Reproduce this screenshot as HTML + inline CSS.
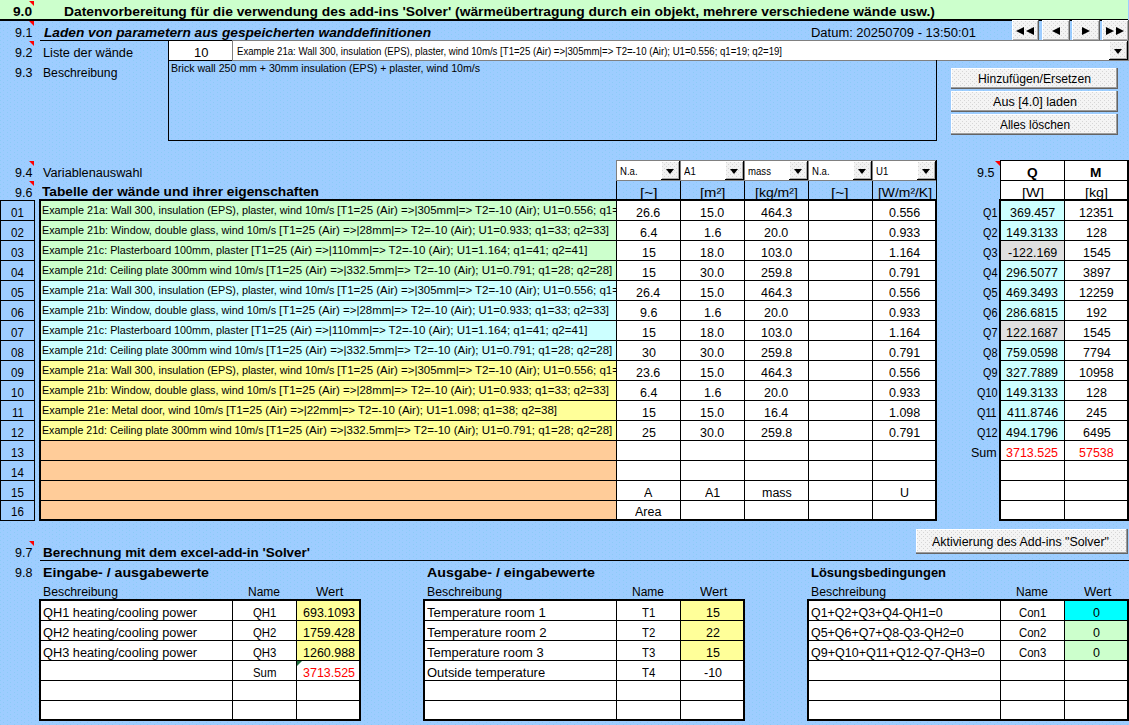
<!DOCTYPE html>
<html><head><meta charset="utf-8"><title>Solver</title><style>
html,body{margin:0;padding:0;}
body{width:1129px;height:725px;position:relative;overflow:hidden;background-color:#9ECDFF;font-family:"Liberation Sans",sans-serif;color:#000;}
.pat{background-image:radial-gradient(circle at 0.5px 0.5px,#8CCBF6 0.5px,rgba(140,203,246,0) 0.9px),radial-gradient(circle at 0.5px 0.5px,#8CCBF6 0.5px,rgba(140,203,246,0) 0.9px);background-size:7px 4px,7px 4px;background-position:0 0,3px 2px;}
body div{position:absolute;}
.t{white-space:pre;line-height:20px;}
.btn{background:#F0F0F0;box-shadow:inset -1px -1px 0 #404040, inset 1px 1px 0 #FFFFFF, inset -2px -2px 0 #808080;}
.btn2{background-color:#F4F4F4;box-shadow:inset -1px -1px 0 #646464, inset -2px -2px 0 #9C9C9C, inset 1px 1px 0 #FFFFFF;}
.btn2,.btn3,.btn4{background-image:radial-gradient(circle at 0.5px 0.5px,#D6D6D6 0.5px,rgba(214,214,214,0) 0.9px),radial-gradient(circle at 0.5px 0.5px,#D6D6D6 0.5px,rgba(214,214,214,0) 0.9px);background-size:4px 4px,4px 4px;background-position:1px 1px,3px 3px;}
.btn4{background-color:#F4F4F4;box-shadow:inset -1px -1px 0 #606060, inset 1px 1px 0 #FFFFFF, inset -2px -2px 0 #B0B0B0;}
.btn3{background-color:#F2F2F2;box-shadow:inset -1px -1px 0 #000000, inset 1px 1px 0 #FFFFFF, inset -2px -2px 0 #A8A8A8;}
</style></head><body>
<div class="pat" style="left:0;top:0;width:1129px;height:725px"></div>
<div style="left:0px;top:0px;width:1128px;height:19px;background:#CCFFCC;"></div>
<div style="left:0px;top:19px;width:1128px;height:2px;background:#000;"></div>
<div style="left:40px;top:40px;width:192px;height:1px;background:#000;"></div>
<div class="btn4" style="left:1012px;top:20px;width:27px;height:21px"></div>
<div class="btn4" style="left:1042px;top:20px;width:28px;height:21px"></div>
<div class="btn4" style="left:1072px;top:20px;width:28px;height:21px"></div>
<div class="btn4" style="left:1102px;top:20px;width:27px;height:21px"></div>
<div style="left:169px;top:41px;width:63px;height:19px;background:#FFFFFF;"></div>
<div style="left:233px;top:41px;width:895px;height:19px;background:#FFFFFF;"></div>
<div style="left:232px;top:40px;width:897px;height:1px;background:#808080;"></div>
<div style="left:232px;top:40px;width:1px;height:21px;background:#808080;"></div>
<div style="left:232px;top:60px;width:897px;height:1px;background:#808080;"></div>
<div style="left:1128px;top:40px;width:1px;height:21px;background:#808080;"></div>
<div style="left:168px;top:40px;width:1px;height:101px;background:#000;"></div>
<div style="left:936px;top:60px;width:1px;height:81px;background:#000;"></div>
<div style="left:168px;top:140px;width:769px;height:1px;background:#000;"></div>
<div style="left:168px;top:60px;width:64px;height:1px;background:#000;"></div>
<div class="btn2" style="left:951px;top:68px;width:167px;height:21px"></div>
<div class="btn2" style="left:951px;top:91px;width:167px;height:21px"></div>
<div class="btn2" style="left:951px;top:114px;width:167px;height:21px"></div>
<div style="left:616px;top:160px;width:64px;height:21px;background:#808080;"></div>
<div style="left:617px;top:161px;width:63px;height:19px;background:#FFFFFF;"></div>
<div style="left:680px;top:160px;width:64px;height:21px;background:#808080;"></div>
<div style="left:681px;top:161px;width:63px;height:19px;background:#FFFFFF;"></div>
<div style="left:744px;top:160px;width:64px;height:21px;background:#808080;"></div>
<div style="left:745px;top:161px;width:63px;height:19px;background:#FFFFFF;"></div>
<div style="left:808px;top:160px;width:64px;height:21px;background:#808080;"></div>
<div style="left:809px;top:161px;width:63px;height:19px;background:#FFFFFF;"></div>
<div style="left:872px;top:160px;width:64px;height:21px;background:#808080;"></div>
<div style="left:873px;top:161px;width:63px;height:19px;background:#FFFFFF;"></div>
<div style="left:616px;top:181px;width:1px;height:20px;background:#000;"></div>
<div style="left:680px;top:181px;width:1px;height:20px;background:#000;"></div>
<div style="left:744px;top:181px;width:1px;height:20px;background:#000;"></div>
<div style="left:808px;top:181px;width:1px;height:20px;background:#000;"></div>
<div style="left:872px;top:181px;width:1px;height:20px;background:#000;"></div>
<div style="left:936px;top:160px;width:1px;height:40px;background:#000;"></div>
<div style="left:935px;top:199px;width:2px;height:322px;background:#000;"></div>
<div style="left:1000px;top:160px;width:128px;height:40px;background:#FFFFFF;"></div>
<div style="left:1000px;top:160px;width:129px;height:1px;background:#000;"></div>
<div style="left:1000px;top:180px;width:129px;height:1px;background:#000;"></div>
<div style="left:1000px;top:160px;width:1px;height:41px;background:#000;"></div>
<div style="left:1064px;top:160px;width:1px;height:361px;background:#000;"></div>
<div style="left:1127px;top:160px;width:2px;height:361px;background:#000;"></div>
<div style="left:1px;top:201px;width:33px;height:19px;background:#9ECDFF;"></div>
<div style="left:41px;top:201px;width:575px;height:19px;background:#CCFFCC;"></div>
<div style="left:617px;top:201px;width:318px;height:19px;background:#FFFFFF;"></div>
<div style="left:1001px;top:201px;width:63px;height:19px;background:#CCFFFF;"></div>
<div style="left:1065px;top:201px;width:62px;height:19px;background:#FFFFFF;"></div>
<div style="left:1px;top:221px;width:33px;height:19px;background:#9ECDFF;"></div>
<div style="left:41px;top:221px;width:575px;height:19px;background:#CCFFCC;"></div>
<div style="left:617px;top:221px;width:318px;height:19px;background:#FFFFFF;"></div>
<div style="left:1001px;top:221px;width:63px;height:19px;background:#CCFFFF;"></div>
<div style="left:1065px;top:221px;width:62px;height:19px;background:#FFFFFF;"></div>
<div style="left:1px;top:241px;width:33px;height:19px;background:#9ECDFF;"></div>
<div style="left:41px;top:241px;width:575px;height:19px;background:#CCFFCC;"></div>
<div style="left:617px;top:241px;width:318px;height:19px;background:#FFFFFF;"></div>
<div style="left:1001px;top:241px;width:63px;height:19px;background:#E0E0E0;"></div>
<div style="left:1065px;top:241px;width:62px;height:19px;background:#FFFFFF;"></div>
<div style="left:1px;top:261px;width:33px;height:19px;background:#9ECDFF;"></div>
<div style="left:41px;top:261px;width:575px;height:19px;background:#CCFFCC;"></div>
<div style="left:617px;top:261px;width:318px;height:19px;background:#FFFFFF;"></div>
<div style="left:1001px;top:261px;width:63px;height:19px;background:#CCFFFF;"></div>
<div style="left:1065px;top:261px;width:62px;height:19px;background:#FFFFFF;"></div>
<div style="left:1px;top:281px;width:33px;height:19px;background:#9ECDFF;"></div>
<div style="left:41px;top:281px;width:575px;height:19px;background:#CCFFFF;"></div>
<div style="left:617px;top:281px;width:318px;height:19px;background:#FFFFFF;"></div>
<div style="left:1001px;top:281px;width:63px;height:19px;background:#CCFFFF;"></div>
<div style="left:1065px;top:281px;width:62px;height:19px;background:#FFFFFF;"></div>
<div style="left:1px;top:301px;width:33px;height:19px;background:#9ECDFF;"></div>
<div style="left:41px;top:301px;width:575px;height:19px;background:#CCFFFF;"></div>
<div style="left:617px;top:301px;width:318px;height:19px;background:#FFFFFF;"></div>
<div style="left:1001px;top:301px;width:63px;height:19px;background:#CCFFFF;"></div>
<div style="left:1065px;top:301px;width:62px;height:19px;background:#FFFFFF;"></div>
<div style="left:1px;top:321px;width:33px;height:19px;background:#9ECDFF;"></div>
<div style="left:41px;top:321px;width:575px;height:19px;background:#CCFFFF;"></div>
<div style="left:617px;top:321px;width:318px;height:19px;background:#FFFFFF;"></div>
<div style="left:1001px;top:321px;width:63px;height:19px;background:#E0E0E0;"></div>
<div style="left:1065px;top:321px;width:62px;height:19px;background:#FFFFFF;"></div>
<div style="left:1px;top:341px;width:33px;height:19px;background:#9ECDFF;"></div>
<div style="left:41px;top:341px;width:575px;height:19px;background:#CCFFFF;"></div>
<div style="left:617px;top:341px;width:318px;height:19px;background:#FFFFFF;"></div>
<div style="left:1001px;top:341px;width:63px;height:19px;background:#CCFFFF;"></div>
<div style="left:1065px;top:341px;width:62px;height:19px;background:#FFFFFF;"></div>
<div style="left:1px;top:361px;width:33px;height:19px;background:#9ECDFF;"></div>
<div style="left:41px;top:361px;width:575px;height:19px;background:#FFFF99;"></div>
<div style="left:617px;top:361px;width:318px;height:19px;background:#FFFFFF;"></div>
<div style="left:1001px;top:361px;width:63px;height:19px;background:#CCFFFF;"></div>
<div style="left:1065px;top:361px;width:62px;height:19px;background:#FFFFFF;"></div>
<div style="left:1px;top:381px;width:33px;height:19px;background:#9ECDFF;"></div>
<div style="left:41px;top:381px;width:575px;height:19px;background:#FFFF99;"></div>
<div style="left:617px;top:381px;width:318px;height:19px;background:#FFFFFF;"></div>
<div style="left:1001px;top:381px;width:63px;height:19px;background:#CCFFFF;"></div>
<div style="left:1065px;top:381px;width:62px;height:19px;background:#FFFFFF;"></div>
<div style="left:1px;top:401px;width:33px;height:19px;background:#9ECDFF;"></div>
<div style="left:41px;top:401px;width:575px;height:19px;background:#FFFF99;"></div>
<div style="left:617px;top:401px;width:318px;height:19px;background:#FFFFFF;"></div>
<div style="left:1001px;top:401px;width:63px;height:19px;background:#CCFFFF;"></div>
<div style="left:1065px;top:401px;width:62px;height:19px;background:#FFFFFF;"></div>
<div style="left:1px;top:421px;width:33px;height:19px;background:#9ECDFF;"></div>
<div style="left:41px;top:421px;width:575px;height:19px;background:#FFFF99;"></div>
<div style="left:617px;top:421px;width:318px;height:19px;background:#FFFFFF;"></div>
<div style="left:1001px;top:421px;width:63px;height:19px;background:#CCFFFF;"></div>
<div style="left:1065px;top:421px;width:62px;height:19px;background:#FFFFFF;"></div>
<div style="left:1px;top:441px;width:33px;height:19px;background:#9ECDFF;"></div>
<div style="left:41px;top:441px;width:575px;height:19px;background:#FFCC99;"></div>
<div style="left:617px;top:441px;width:318px;height:19px;background:#FFFFFF;"></div>
<div style="left:1001px;top:441px;width:63px;height:19px;background:#FFFFFF;"></div>
<div style="left:1065px;top:441px;width:62px;height:19px;background:#FFFFFF;"></div>
<div style="left:1px;top:461px;width:33px;height:19px;background:#9ECDFF;"></div>
<div style="left:41px;top:461px;width:575px;height:19px;background:#FFCC99;"></div>
<div style="left:617px;top:461px;width:318px;height:19px;background:#FFFFFF;"></div>
<div style="left:1001px;top:461px;width:63px;height:19px;background:#FFFFFF;"></div>
<div style="left:1065px;top:461px;width:62px;height:19px;background:#FFFFFF;"></div>
<div style="left:1px;top:481px;width:33px;height:19px;background:#9ECDFF;"></div>
<div style="left:41px;top:481px;width:575px;height:19px;background:#FFCC99;"></div>
<div style="left:617px;top:481px;width:318px;height:19px;background:#FFFFFF;"></div>
<div style="left:1001px;top:481px;width:63px;height:19px;background:#FFFFFF;"></div>
<div style="left:1065px;top:481px;width:62px;height:19px;background:#FFFFFF;"></div>
<div style="left:1px;top:501px;width:33px;height:19px;background:#9ECDFF;"></div>
<div style="left:41px;top:501px;width:575px;height:19px;background:#FFCC99;"></div>
<div style="left:617px;top:501px;width:318px;height:19px;background:#FFFFFF;"></div>
<div style="left:1001px;top:501px;width:63px;height:19px;background:#FFFFFF;"></div>
<div style="left:1065px;top:501px;width:62px;height:19px;background:#FFFFFF;"></div>
<div style="left:0px;top:200px;width:35px;height:1px;background:#000;"></div>
<div style="left:40px;top:199px;width:897px;height:2px;background:#000;"></div>
<div style="left:1000px;top:199px;width:129px;height:2px;background:#000;"></div>
<div style="left:0px;top:220px;width:35px;height:1px;background:#000;"></div>
<div style="left:40px;top:220px;width:896px;height:1px;background:#000;"></div>
<div style="left:1000px;top:220px;width:128px;height:1px;background:#000;"></div>
<div style="left:0px;top:240px;width:35px;height:1px;background:#000;"></div>
<div style="left:40px;top:240px;width:896px;height:1px;background:#000;"></div>
<div style="left:1000px;top:240px;width:128px;height:1px;background:#000;"></div>
<div style="left:0px;top:260px;width:35px;height:1px;background:#000;"></div>
<div style="left:40px;top:260px;width:896px;height:1px;background:#000;"></div>
<div style="left:1000px;top:260px;width:128px;height:1px;background:#000;"></div>
<div style="left:0px;top:280px;width:35px;height:1px;background:#000;"></div>
<div style="left:40px;top:280px;width:896px;height:1px;background:#000;"></div>
<div style="left:1000px;top:280px;width:128px;height:1px;background:#000;"></div>
<div style="left:0px;top:300px;width:35px;height:1px;background:#000;"></div>
<div style="left:40px;top:300px;width:896px;height:1px;background:#000;"></div>
<div style="left:1000px;top:300px;width:128px;height:1px;background:#000;"></div>
<div style="left:0px;top:320px;width:35px;height:1px;background:#000;"></div>
<div style="left:40px;top:320px;width:896px;height:1px;background:#000;"></div>
<div style="left:1000px;top:320px;width:128px;height:1px;background:#000;"></div>
<div style="left:0px;top:340px;width:35px;height:1px;background:#000;"></div>
<div style="left:40px;top:340px;width:896px;height:1px;background:#000;"></div>
<div style="left:1000px;top:340px;width:128px;height:1px;background:#000;"></div>
<div style="left:0px;top:360px;width:35px;height:1px;background:#000;"></div>
<div style="left:40px;top:360px;width:896px;height:1px;background:#000;"></div>
<div style="left:1000px;top:360px;width:128px;height:1px;background:#000;"></div>
<div style="left:0px;top:380px;width:35px;height:1px;background:#000;"></div>
<div style="left:40px;top:380px;width:896px;height:1px;background:#000;"></div>
<div style="left:1000px;top:380px;width:128px;height:1px;background:#000;"></div>
<div style="left:0px;top:400px;width:35px;height:1px;background:#000;"></div>
<div style="left:40px;top:400px;width:896px;height:1px;background:#000;"></div>
<div style="left:1000px;top:400px;width:128px;height:1px;background:#000;"></div>
<div style="left:0px;top:420px;width:35px;height:1px;background:#000;"></div>
<div style="left:40px;top:420px;width:896px;height:1px;background:#000;"></div>
<div style="left:1000px;top:420px;width:128px;height:1px;background:#000;"></div>
<div style="left:0px;top:440px;width:35px;height:1px;background:#000;"></div>
<div style="left:40px;top:440px;width:896px;height:1px;background:#000;"></div>
<div style="left:1000px;top:440px;width:128px;height:1px;background:#000;"></div>
<div style="left:0px;top:460px;width:35px;height:1px;background:#000;"></div>
<div style="left:40px;top:460px;width:896px;height:1px;background:#000;"></div>
<div style="left:1000px;top:460px;width:128px;height:1px;background:#000;"></div>
<div style="left:0px;top:480px;width:35px;height:1px;background:#000;"></div>
<div style="left:40px;top:480px;width:896px;height:1px;background:#000;"></div>
<div style="left:1000px;top:480px;width:128px;height:1px;background:#000;"></div>
<div style="left:0px;top:500px;width:35px;height:1px;background:#000;"></div>
<div style="left:40px;top:500px;width:896px;height:1px;background:#000;"></div>
<div style="left:1000px;top:500px;width:128px;height:1px;background:#000;"></div>
<div style="left:0px;top:520px;width:35px;height:1px;background:#000;"></div>
<div style="left:40px;top:519px;width:897px;height:2px;background:#000;"></div>
<div style="left:1000px;top:519px;width:129px;height:2px;background:#000;"></div>
<div style="left:0px;top:200px;width:1px;height:321px;background:#000;"></div>
<div style="left:34px;top:200px;width:1px;height:321px;background:#000;"></div>
<div style="left:39px;top:199px;width:2px;height:322px;background:#000;"></div>
<div style="left:616px;top:200px;width:1px;height:321px;background:#000;"></div>
<div style="left:680px;top:200px;width:1px;height:321px;background:#000;"></div>
<div style="left:744px;top:200px;width:1px;height:321px;background:#000;"></div>
<div style="left:808px;top:200px;width:1px;height:321px;background:#000;"></div>
<div style="left:872px;top:200px;width:1px;height:321px;background:#000;"></div>
<div style="left:999px;top:199px;width:2px;height:322px;background:#000;"></div>
<div style="left:40px;top:560px;width:1089px;height:1px;background:#000;"></div>
<div class="btn2" style="left:916px;top:529px;width:212px;height:25px"></div>
<div style="left:40px;top:600px;width:320px;height:121px;background:#FFFFFF;"></div>
<div style="left:297px;top:601px;width:63px;height:19px;background:#FFFF99;"></div>
<div style="left:297px;top:621px;width:63px;height:19px;background:#FFFF99;"></div>
<div style="left:297px;top:641px;width:63px;height:19px;background:#FFFF99;"></div>
<div style="left:40px;top:620px;width:321px;height:1px;background:#000;"></div>
<div style="left:40px;top:640px;width:321px;height:1px;background:#000;"></div>
<div style="left:40px;top:660px;width:321px;height:1px;background:#000;"></div>
<div style="left:40px;top:680px;width:321px;height:1px;background:#000;"></div>
<div style="left:40px;top:700px;width:321px;height:1px;background:#000;"></div>
<div style="left:39px;top:599px;width:322px;height:2px;background:#000;"></div>
<div style="left:39px;top:719px;width:322px;height:2px;background:#000;"></div>
<div style="left:39px;top:599px;width:2px;height:122px;background:#000;"></div>
<div style="left:232px;top:600px;width:1px;height:121px;background:#000;"></div>
<div style="left:296px;top:600px;width:1px;height:121px;background:#000;"></div>
<div style="left:359px;top:599px;width:2px;height:122px;background:#000;"></div>
<div style="left:424px;top:600px;width:320px;height:121px;background:#FFFFFF;"></div>
<div style="left:681px;top:601px;width:63px;height:19px;background:#FFFF99;"></div>
<div style="left:681px;top:621px;width:63px;height:19px;background:#FFFF99;"></div>
<div style="left:681px;top:641px;width:63px;height:19px;background:#FFFF99;"></div>
<div style="left:424px;top:620px;width:321px;height:1px;background:#000;"></div>
<div style="left:424px;top:640px;width:321px;height:1px;background:#000;"></div>
<div style="left:424px;top:660px;width:321px;height:1px;background:#000;"></div>
<div style="left:424px;top:680px;width:321px;height:1px;background:#000;"></div>
<div style="left:424px;top:700px;width:321px;height:1px;background:#000;"></div>
<div style="left:423px;top:599px;width:322px;height:2px;background:#000;"></div>
<div style="left:423px;top:719px;width:322px;height:2px;background:#000;"></div>
<div style="left:423px;top:599px;width:2px;height:122px;background:#000;"></div>
<div style="left:616px;top:600px;width:1px;height:121px;background:#000;"></div>
<div style="left:680px;top:600px;width:1px;height:121px;background:#000;"></div>
<div style="left:743px;top:599px;width:2px;height:122px;background:#000;"></div>
<div style="left:808px;top:600px;width:320px;height:121px;background:#FFFFFF;"></div>
<div style="left:1065px;top:601px;width:63px;height:19px;background:#00FFFF;"></div>
<div style="left:1065px;top:621px;width:63px;height:19px;background:#CCFFCC;"></div>
<div style="left:1065px;top:641px;width:63px;height:19px;background:#CCFFCC;"></div>
<div style="left:808px;top:620px;width:321px;height:1px;background:#000;"></div>
<div style="left:808px;top:640px;width:321px;height:1px;background:#000;"></div>
<div style="left:808px;top:660px;width:321px;height:1px;background:#000;"></div>
<div style="left:808px;top:680px;width:321px;height:1px;background:#000;"></div>
<div style="left:808px;top:700px;width:321px;height:1px;background:#000;"></div>
<div style="left:807px;top:599px;width:322px;height:2px;background:#000;"></div>
<div style="left:807px;top:719px;width:322px;height:2px;background:#000;"></div>
<div style="left:807px;top:599px;width:2px;height:122px;background:#000;"></div>
<div style="left:1000px;top:600px;width:1px;height:121px;background:#000;"></div>
<div style="left:1064px;top:600px;width:1px;height:121px;background:#000;"></div>
<div style="left:1127px;top:599px;width:2px;height:122px;background:#000;"></div>
<div style="left:297px;top:661px;width:0;height:0;border-top:5px solid #1E6E3C;border-right:5px solid transparent"></div>
<div class="btn3" style="left:1109px;top:41px;width:19px;height:19px"></div>
<div class="btn3" style="left:661px;top:161px;width:19px;height:19px"></div>
<div class="btn3" style="left:725px;top:161px;width:19px;height:19px"></div>
<div class="btn3" style="left:789px;top:161px;width:19px;height:19px"></div>
<div class="btn3" style="left:853px;top:161px;width:19px;height:19px"></div>
<div class="btn3" style="left:917px;top:161px;width:19px;height:19px"></div>
<div style="left:1114px;top:49px;width:0;height:0;border-top:5px solid #000;border-left:4.5px solid transparent;border-right:4.5px solid transparent"></div>
<div style="left:666px;top:169px;width:0;height:0;border-top:5px solid #000;border-left:4.5px solid transparent;border-right:4.5px solid transparent"></div>
<div style="left:730px;top:169px;width:0;height:0;border-top:5px solid #000;border-left:4.5px solid transparent;border-right:4.5px solid transparent"></div>
<div style="left:794px;top:169px;width:0;height:0;border-top:5px solid #000;border-left:4.5px solid transparent;border-right:4.5px solid transparent"></div>
<div style="left:858px;top:169px;width:0;height:0;border-top:5px solid #000;border-left:4.5px solid transparent;border-right:4.5px solid transparent"></div>
<div style="left:922px;top:169px;width:0;height:0;border-top:5px solid #000;border-left:4.5px solid transparent;border-right:4.5px solid transparent"></div>
<div class="t" style="left:12.98px;top:2px;font-size:12px;font-weight:bold;transform:scaleX(1.1400);transform-origin:0 0;">9.0</div>
<div class="t" style="left:64px;top:2px;font-size:12px;font-weight:bold;transform:scaleX(1.1509);transform-origin:0 0;">Datenvorbereitung für die verwendung des add-ins &#x27;Solver&#x27; (wärmeübertragung durch ein objekt, mehrere verschiedene wände usw.)</div>
<div class="t" style="left:14.64px;top:23px;font-size:12px;transform:scaleX(1.0400);transform-origin:0 0;">9.1</div>
<div class="t" style="left:43.5px;top:23px;font-size:12px;font-weight:bold;font-style:italic;transform:scaleX(1.1402);transform-origin:0 0;">Laden von parametern aus gespeicherten wanddefinitionen</div>
<div class="t" style="left:811px;top:23px;font-size:12px;transform:scaleX(1.0800);transform-origin:0 0;">Datum: 20250709 - 13:50:01</div>
<div class="t" style="left:14.64px;top:43px;font-size:12px;transform:scaleX(1.0400);transform-origin:0 0;">9.2</div>
<div class="t" style="left:43px;top:43px;font-size:12px;transform:scaleX(1.0621);transform-origin:0 0;">Liste der wände</div>
<div class="t" style="left:193.79px;top:43px;font-size:12px;transform:scaleX(1.0800);transform-origin:0 0;">10</div>
<div class="t" style="left:237px;top:42px;font-size:10px;transform:scaleX(0.9614);transform-origin:0 0;">Example 21a: Wall 300, insulation (EPS), plaster, wind 10m/s [T1=25 (Air) =&gt;|305mm|=&gt; T2=-10 (Air); U1=0.556; q1=19; q2=19]</div>
<div class="t" style="left:14.64px;top:63px;font-size:12px;transform:scaleX(1.0400);transform-origin:0 0;">9.3</div>
<div class="t" style="left:43px;top:63px;font-size:12px;transform:scaleX(1.0138);transform-origin:0 0;">Beschreibung</div>
<div class="t" style="left:171px;top:58px;font-size:11px;transform:scaleX(0.9627);transform-origin:0 0;">Brick wall 250 mm + 30mm insulation (EPS) + plaster, wind 10m/s</div>
<div class="t" style="left:978.00px;top:69px;font-size:12px;transform:scaleX(1.0143);transform-origin:0 0;">Hinzufügen/Ersetzen</div>
<div class="t" style="left:992.50px;top:92px;font-size:12px;transform:scaleX(1.0492);transform-origin:0 0;">Aus [4.0] laden</div>
<div class="t" style="left:999.50px;top:115px;font-size:12px;transform:scaleX(0.9898);transform-origin:0 0;">Alles löschen</div>
<div class="t" style="left:14.64px;top:163px;font-size:12px;transform:scaleX(1.0400);transform-origin:0 0;">9.4</div>
<div class="t" style="left:43px;top:163px;font-size:12px;transform:scaleX(1.0581);transform-origin:0 0;">Variablenauswahl</div>
<div class="t" style="left:620px;top:162px;font-size:10px;transform:scaleX(0.9600);transform-origin:0 0;">N.a.</div>
<div class="t" style="left:684px;top:162px;font-size:10px;transform:scaleX(0.9600);transform-origin:0 0;">A1</div>
<div class="t" style="left:748px;top:162px;font-size:10px;transform:scaleX(0.9600);transform-origin:0 0;">mass</div>
<div class="t" style="left:812px;top:162px;font-size:10px;transform:scaleX(0.9600);transform-origin:0 0;">N.a.</div>
<div class="t" style="left:876px;top:162px;font-size:10px;transform:scaleX(0.9600);transform-origin:0 0;">U1</div>
<div class="t" style="left:639.75px;top:183px;font-size:12px;transform:scaleX(1.2932);transform-origin:0 0;">[~]</div>
<div class="t" style="left:699.75px;top:183px;font-size:12px;transform:scaleX(1.2336);transform-origin:0 0;">[m²]</div>
<div class="t" style="left:755.00px;top:183px;font-size:12px;transform:scaleX(1.1671);transform-origin:0 0;">[kg/m²]</div>
<div class="t" style="left:831.15px;top:183px;font-size:12px;transform:scaleX(1.2932);transform-origin:0 0;">[~]</div>
<div class="t" style="left:878.00px;top:183px;font-size:12px;transform:scaleX(1.1570);transform-origin:0 0;">[W/m²/K]</div>
<div class="t" style="left:14.64px;top:183px;font-size:12px;transform:scaleX(1.0400);transform-origin:0 0;">9.6</div>
<div class="t" style="left:42px;top:182px;font-size:12px;font-weight:bold;transform:scaleX(1.1422);transform-origin:0 0;">Tabelle der wände und ihrer eigenschaften</div>
<div class="t" style="left:976.64px;top:163px;font-size:12px;transform:scaleX(1.0400);transform-origin:0 0;">9.5</div>
<div class="t" style="left:1026.67px;top:163px;font-size:12px;font-weight:bold;transform:scaleX(1.1400);transform-origin:0 0;">Q</div>
<div class="t" style="left:1090.30px;top:163px;font-size:12px;font-weight:bold;transform:scaleX(1.1400);transform-origin:0 0;">M</div>
<div class="t" style="left:1022.00px;top:183px;font-size:12px;transform:scaleX(1.2222);transform-origin:0 0;">[W]</div>
<div class="t" style="left:1085.00px;top:183px;font-size:12px;transform:scaleX(1.1890);transform-origin:0 0;">[kg]</div>
<div class="t" style="left:11.19px;top:203px;font-size:12px;transform:scaleX(0.9600);transform-origin:0 0;">01</div>
<div style="left:41px;top:201px;width:575px;height:19px;overflow:hidden"><div class="t" style="left:1.00px;top:-1.00px;font-size:11px;transform:scaleX(0.9810);transform-origin:0 0;">Example 21a: Wall 300, insulation (EPS), plaster, wind 10m/s </div></div>
<div style="left:41px;top:201px;width:575px;height:19px;overflow:hidden"><div class="t" style="left:296.00px;top:-1.00px;font-size:11px;transform:scaleX(1.0432);transform-origin:0 0;">[T1=25 (Air) =&gt;|305mm|=&gt; T2=-10 (Air); U1=0.556; q1=19; q2=19]</div></div>
<div class="t" style="left:636.35px;top:203px;font-size:12px;transform:scaleX(1.0400);transform-origin:0 0;">26.6</div>
<div class="t" style="left:700.35px;top:203px;font-size:12px;transform:scaleX(1.0400);transform-origin:0 0;">15.0</div>
<div class="t" style="left:760.88px;top:203px;font-size:12px;transform:scaleX(1.0400);transform-origin:0 0;">464.3</div>
<div class="t" style="left:888.88px;top:203px;font-size:12px;transform:scaleX(1.0400);transform-origin:0 0;">0.556</div>
<div class="t" style="left:982.59px;top:203px;font-size:12px;transform:scaleX(0.9000);transform-origin:0 0;">Q1</div>
<div class="t" style="left:1009.94px;top:203px;font-size:12px;transform:scaleX(1.0400);transform-origin:0 0;">369.457</div>
<div class="t" style="left:1079.14px;top:203px;font-size:12px;transform:scaleX(1.0400);transform-origin:0 0;">12351</div>
<div class="t" style="left:11.19px;top:223px;font-size:12px;transform:scaleX(0.9600);transform-origin:0 0;">02</div>
<div style="left:41px;top:221px;width:575px;height:19px;overflow:hidden"><div class="t" style="left:1.00px;top:-1.00px;font-size:11px;transform:scaleX(0.9817);transform-origin:0 0;">Example 21b: Window, double glass, wind 10m/s </div></div>
<div style="left:41px;top:221px;width:575px;height:19px;overflow:hidden"><div class="t" style="left:237.80px;top:-1.00px;font-size:11px;transform:scaleX(1.0428);transform-origin:0 0;">[T1=25 (Air) =&gt;|28mm|=&gt; T2=-10 (Air); U1=0.933; q1=33; q2=33]</div></div>
<div class="t" style="left:639.82px;top:223px;font-size:12px;transform:scaleX(1.0400);transform-origin:0 0;">6.4</div>
<div class="t" style="left:703.82px;top:223px;font-size:12px;transform:scaleX(1.0400);transform-origin:0 0;">1.6</div>
<div class="t" style="left:764.35px;top:223px;font-size:12px;transform:scaleX(1.0400);transform-origin:0 0;">20.0</div>
<div class="t" style="left:888.88px;top:223px;font-size:12px;transform:scaleX(1.0400);transform-origin:0 0;">0.933</div>
<div class="t" style="left:982.59px;top:223px;font-size:12px;transform:scaleX(0.9000);transform-origin:0 0;">Q2</div>
<div class="t" style="left:1006.47px;top:223px;font-size:12px;transform:scaleX(1.0400);transform-origin:0 0;">149.3133</div>
<div class="t" style="left:1086.08px;top:223px;font-size:12px;transform:scaleX(1.0400);transform-origin:0 0;">128</div>
<div class="t" style="left:11.19px;top:243px;font-size:12px;transform:scaleX(0.9600);transform-origin:0 0;">03</div>
<div style="left:41px;top:241px;width:575px;height:19px;overflow:hidden"><div class="t" style="left:1.00px;top:-1.00px;font-size:11px;transform:scaleX(0.9776);transform-origin:0 0;">Example 21c: Plasterboard 100mm, plaster </div></div>
<div style="left:41px;top:241px;width:575px;height:19px;overflow:hidden"><div class="t" style="left:209.90px;top:-1.00px;font-size:11px;transform:scaleX(1.0458);transform-origin:0 0;">[T1=25 (Air) =&gt;|110mm|=&gt; T2=-10 (Air); U1=1.164; q1=41; q2=41]</div></div>
<div class="t" style="left:641.55px;top:243px;font-size:12px;transform:scaleX(1.0400);transform-origin:0 0;">15</div>
<div class="t" style="left:700.35px;top:243px;font-size:12px;transform:scaleX(1.0400);transform-origin:0 0;">18.0</div>
<div class="t" style="left:760.88px;top:243px;font-size:12px;transform:scaleX(1.0400);transform-origin:0 0;">103.0</div>
<div class="t" style="left:888.88px;top:243px;font-size:12px;transform:scaleX(1.0400);transform-origin:0 0;">1.164</div>
<div class="t" style="left:982.59px;top:243px;font-size:12px;transform:scaleX(0.9000);transform-origin:0 0;">Q3</div>
<div class="t" style="left:1007.87px;top:243px;font-size:12px;transform:scaleX(1.0400);transform-origin:0 0;">-122.169</div>
<div class="t" style="left:1082.61px;top:243px;font-size:12px;transform:scaleX(1.0400);transform-origin:0 0;">1545</div>
<div class="t" style="left:11.19px;top:263px;font-size:12px;transform:scaleX(0.9600);transform-origin:0 0;">04</div>
<div style="left:41px;top:261px;width:575px;height:19px;overflow:hidden"><div class="t" style="left:1.00px;top:-1.00px;font-size:11px;transform:scaleX(0.9658);transform-origin:0 0;">Example 21d: Ceiling plate 300mm wind 10m/s </div></div>
<div style="left:41px;top:261px;width:575px;height:19px;overflow:hidden"><div class="t" style="left:225.10px;top:-1.00px;font-size:11px;transform:scaleX(1.0439);transform-origin:0 0;">[T1=25 (Air) =&gt;|332.5mm|=&gt; T2=-10 (Air); U1=0.791; q1=28; q2=28]</div></div>
<div class="t" style="left:641.55px;top:263px;font-size:12px;transform:scaleX(1.0400);transform-origin:0 0;">15</div>
<div class="t" style="left:700.35px;top:263px;font-size:12px;transform:scaleX(1.0400);transform-origin:0 0;">30.0</div>
<div class="t" style="left:760.88px;top:263px;font-size:12px;transform:scaleX(1.0400);transform-origin:0 0;">259.8</div>
<div class="t" style="left:888.88px;top:263px;font-size:12px;transform:scaleX(1.0400);transform-origin:0 0;">0.791</div>
<div class="t" style="left:982.59px;top:263px;font-size:12px;transform:scaleX(0.9000);transform-origin:0 0;">Q4</div>
<div class="t" style="left:1006.47px;top:263px;font-size:12px;transform:scaleX(1.0400);transform-origin:0 0;">296.5077</div>
<div class="t" style="left:1082.61px;top:263px;font-size:12px;transform:scaleX(1.0400);transform-origin:0 0;">3897</div>
<div class="t" style="left:11.19px;top:283px;font-size:12px;transform:scaleX(0.9600);transform-origin:0 0;">05</div>
<div style="left:41px;top:281px;width:575px;height:19px;overflow:hidden"><div class="t" style="left:1.00px;top:-1.00px;font-size:11px;transform:scaleX(0.9810);transform-origin:0 0;">Example 21a: Wall 300, insulation (EPS), plaster, wind 10m/s </div></div>
<div style="left:41px;top:281px;width:575px;height:19px;overflow:hidden"><div class="t" style="left:296.00px;top:-1.00px;font-size:11px;transform:scaleX(1.0432);transform-origin:0 0;">[T1=25 (Air) =&gt;|305mm|=&gt; T2=-10 (Air); U1=0.556; q1=19; q2=19]</div></div>
<div class="t" style="left:636.35px;top:283px;font-size:12px;transform:scaleX(1.0400);transform-origin:0 0;">26.4</div>
<div class="t" style="left:700.35px;top:283px;font-size:12px;transform:scaleX(1.0400);transform-origin:0 0;">15.0</div>
<div class="t" style="left:760.88px;top:283px;font-size:12px;transform:scaleX(1.0400);transform-origin:0 0;">464.3</div>
<div class="t" style="left:888.88px;top:283px;font-size:12px;transform:scaleX(1.0400);transform-origin:0 0;">0.556</div>
<div class="t" style="left:982.59px;top:283px;font-size:12px;transform:scaleX(0.9000);transform-origin:0 0;">Q5</div>
<div class="t" style="left:1006.47px;top:283px;font-size:12px;transform:scaleX(1.0400);transform-origin:0 0;">469.3493</div>
<div class="t" style="left:1079.14px;top:283px;font-size:12px;transform:scaleX(1.0400);transform-origin:0 0;">12259</div>
<div class="t" style="left:11.19px;top:303px;font-size:12px;transform:scaleX(0.9600);transform-origin:0 0;">06</div>
<div style="left:41px;top:301px;width:575px;height:19px;overflow:hidden"><div class="t" style="left:1.00px;top:-1.00px;font-size:11px;transform:scaleX(0.9817);transform-origin:0 0;">Example 21b: Window, double glass, wind 10m/s </div></div>
<div style="left:41px;top:301px;width:575px;height:19px;overflow:hidden"><div class="t" style="left:237.80px;top:-1.00px;font-size:11px;transform:scaleX(1.0428);transform-origin:0 0;">[T1=25 (Air) =&gt;|28mm|=&gt; T2=-10 (Air); U1=0.933; q1=33; q2=33]</div></div>
<div class="t" style="left:639.82px;top:303px;font-size:12px;transform:scaleX(1.0400);transform-origin:0 0;">9.6</div>
<div class="t" style="left:703.82px;top:303px;font-size:12px;transform:scaleX(1.0400);transform-origin:0 0;">1.6</div>
<div class="t" style="left:764.35px;top:303px;font-size:12px;transform:scaleX(1.0400);transform-origin:0 0;">20.0</div>
<div class="t" style="left:888.88px;top:303px;font-size:12px;transform:scaleX(1.0400);transform-origin:0 0;">0.933</div>
<div class="t" style="left:982.59px;top:303px;font-size:12px;transform:scaleX(0.9000);transform-origin:0 0;">Q6</div>
<div class="t" style="left:1006.47px;top:303px;font-size:12px;transform:scaleX(1.0400);transform-origin:0 0;">286.6815</div>
<div class="t" style="left:1086.08px;top:303px;font-size:12px;transform:scaleX(1.0400);transform-origin:0 0;">192</div>
<div class="t" style="left:11.19px;top:323px;font-size:12px;transform:scaleX(0.9600);transform-origin:0 0;">07</div>
<div style="left:41px;top:321px;width:575px;height:19px;overflow:hidden"><div class="t" style="left:1.00px;top:-1.00px;font-size:11px;transform:scaleX(0.9776);transform-origin:0 0;">Example 21c: Plasterboard 100mm, plaster </div></div>
<div style="left:41px;top:321px;width:575px;height:19px;overflow:hidden"><div class="t" style="left:209.90px;top:-1.00px;font-size:11px;transform:scaleX(1.0458);transform-origin:0 0;">[T1=25 (Air) =&gt;|110mm|=&gt; T2=-10 (Air); U1=1.164; q1=41; q2=41]</div></div>
<div class="t" style="left:641.55px;top:323px;font-size:12px;transform:scaleX(1.0400);transform-origin:0 0;">15</div>
<div class="t" style="left:700.35px;top:323px;font-size:12px;transform:scaleX(1.0400);transform-origin:0 0;">18.0</div>
<div class="t" style="left:760.88px;top:323px;font-size:12px;transform:scaleX(1.0400);transform-origin:0 0;">103.0</div>
<div class="t" style="left:888.88px;top:323px;font-size:12px;transform:scaleX(1.0400);transform-origin:0 0;">1.164</div>
<div class="t" style="left:982.59px;top:323px;font-size:12px;transform:scaleX(0.9000);transform-origin:0 0;">Q7</div>
<div class="t" style="left:1006.47px;top:323px;font-size:12px;transform:scaleX(1.0400);transform-origin:0 0;">122.1687</div>
<div class="t" style="left:1082.61px;top:323px;font-size:12px;transform:scaleX(1.0400);transform-origin:0 0;">1545</div>
<div class="t" style="left:11.19px;top:343px;font-size:12px;transform:scaleX(0.9600);transform-origin:0 0;">08</div>
<div style="left:41px;top:341px;width:575px;height:19px;overflow:hidden"><div class="t" style="left:1.00px;top:-1.00px;font-size:11px;transform:scaleX(0.9658);transform-origin:0 0;">Example 21d: Ceiling plate 300mm wind 10m/s </div></div>
<div style="left:41px;top:341px;width:575px;height:19px;overflow:hidden"><div class="t" style="left:225.10px;top:-1.00px;font-size:11px;transform:scaleX(1.0439);transform-origin:0 0;">[T1=25 (Air) =&gt;|332.5mm|=&gt; T2=-10 (Air); U1=0.791; q1=28; q2=28]</div></div>
<div class="t" style="left:641.55px;top:343px;font-size:12px;transform:scaleX(1.0400);transform-origin:0 0;">30</div>
<div class="t" style="left:700.35px;top:343px;font-size:12px;transform:scaleX(1.0400);transform-origin:0 0;">30.0</div>
<div class="t" style="left:760.88px;top:343px;font-size:12px;transform:scaleX(1.0400);transform-origin:0 0;">259.8</div>
<div class="t" style="left:888.88px;top:343px;font-size:12px;transform:scaleX(1.0400);transform-origin:0 0;">0.791</div>
<div class="t" style="left:982.59px;top:343px;font-size:12px;transform:scaleX(0.9000);transform-origin:0 0;">Q8</div>
<div class="t" style="left:1006.47px;top:343px;font-size:12px;transform:scaleX(1.0400);transform-origin:0 0;">759.0598</div>
<div class="t" style="left:1082.61px;top:343px;font-size:12px;transform:scaleX(1.0400);transform-origin:0 0;">7794</div>
<div class="t" style="left:11.19px;top:363px;font-size:12px;transform:scaleX(0.9600);transform-origin:0 0;">09</div>
<div style="left:41px;top:361px;width:575px;height:19px;overflow:hidden"><div class="t" style="left:1.00px;top:-1.00px;font-size:11px;transform:scaleX(0.9810);transform-origin:0 0;">Example 21a: Wall 300, insulation (EPS), plaster, wind 10m/s </div></div>
<div style="left:41px;top:361px;width:575px;height:19px;overflow:hidden"><div class="t" style="left:296.00px;top:-1.00px;font-size:11px;transform:scaleX(1.0432);transform-origin:0 0;">[T1=25 (Air) =&gt;|305mm|=&gt; T2=-10 (Air); U1=0.556; q1=19; q2=19]</div></div>
<div class="t" style="left:636.35px;top:363px;font-size:12px;transform:scaleX(1.0400);transform-origin:0 0;">23.6</div>
<div class="t" style="left:700.35px;top:363px;font-size:12px;transform:scaleX(1.0400);transform-origin:0 0;">15.0</div>
<div class="t" style="left:760.88px;top:363px;font-size:12px;transform:scaleX(1.0400);transform-origin:0 0;">464.3</div>
<div class="t" style="left:888.88px;top:363px;font-size:12px;transform:scaleX(1.0400);transform-origin:0 0;">0.556</div>
<div class="t" style="left:982.59px;top:363px;font-size:12px;transform:scaleX(0.9000);transform-origin:0 0;">Q9</div>
<div class="t" style="left:1006.47px;top:363px;font-size:12px;transform:scaleX(1.0400);transform-origin:0 0;">327.7889</div>
<div class="t" style="left:1079.14px;top:363px;font-size:12px;transform:scaleX(1.0400);transform-origin:0 0;">10958</div>
<div class="t" style="left:11.19px;top:383px;font-size:12px;transform:scaleX(0.9600);transform-origin:0 0;">10</div>
<div style="left:41px;top:381px;width:575px;height:19px;overflow:hidden"><div class="t" style="left:1.00px;top:-1.00px;font-size:11px;transform:scaleX(0.9817);transform-origin:0 0;">Example 21b: Window, double glass, wind 10m/s </div></div>
<div style="left:41px;top:381px;width:575px;height:19px;overflow:hidden"><div class="t" style="left:237.80px;top:-1.00px;font-size:11px;transform:scaleX(1.0428);transform-origin:0 0;">[T1=25 (Air) =&gt;|28mm|=&gt; T2=-10 (Air); U1=0.933; q1=33; q2=33]</div></div>
<div class="t" style="left:639.82px;top:383px;font-size:12px;transform:scaleX(1.0400);transform-origin:0 0;">6.4</div>
<div class="t" style="left:703.82px;top:383px;font-size:12px;transform:scaleX(1.0400);transform-origin:0 0;">1.6</div>
<div class="t" style="left:764.35px;top:383px;font-size:12px;transform:scaleX(1.0400);transform-origin:0 0;">20.0</div>
<div class="t" style="left:888.88px;top:383px;font-size:12px;transform:scaleX(1.0400);transform-origin:0 0;">0.933</div>
<div class="t" style="left:976.58px;top:383px;font-size:12px;transform:scaleX(0.9000);transform-origin:0 0;">Q10</div>
<div class="t" style="left:1006.47px;top:383px;font-size:12px;transform:scaleX(1.0400);transform-origin:0 0;">149.3133</div>
<div class="t" style="left:1086.08px;top:383px;font-size:12px;transform:scaleX(1.0400);transform-origin:0 0;">128</div>
<div class="t" style="left:11.62px;top:403px;font-size:12px;transform:scaleX(0.9600);transform-origin:0 0;">11</div>
<div style="left:41px;top:401px;width:575px;height:19px;overflow:hidden"><div class="t" style="left:1.00px;top:-1.00px;font-size:11px;transform:scaleX(0.9872);transform-origin:0 0;">Example 21e: Metal door, wind 10m/s </div></div>
<div style="left:41px;top:401px;width:575px;height:19px;overflow:hidden"><div class="t" style="left:184.80px;top:-1.00px;font-size:11px;transform:scaleX(1.0460);transform-origin:0 0;">[T1=25 (Air) =&gt;|22mm|=&gt; T2=-10 (Air); U1=1.098; q1=38; q2=38]</div></div>
<div class="t" style="left:641.55px;top:403px;font-size:12px;transform:scaleX(1.0400);transform-origin:0 0;">15</div>
<div class="t" style="left:700.35px;top:403px;font-size:12px;transform:scaleX(1.0400);transform-origin:0 0;">15.0</div>
<div class="t" style="left:764.35px;top:403px;font-size:12px;transform:scaleX(1.0400);transform-origin:0 0;">16.4</div>
<div class="t" style="left:888.88px;top:403px;font-size:12px;transform:scaleX(1.0400);transform-origin:0 0;">1.098</div>
<div class="t" style="left:977.38px;top:403px;font-size:12px;transform:scaleX(0.9000);transform-origin:0 0;">Q11</div>
<div class="t" style="left:1006.93px;top:403px;font-size:12px;transform:scaleX(1.0400);transform-origin:0 0;">411.8746</div>
<div class="t" style="left:1086.08px;top:403px;font-size:12px;transform:scaleX(1.0400);transform-origin:0 0;">245</div>
<div class="t" style="left:11.19px;top:423px;font-size:12px;transform:scaleX(0.9600);transform-origin:0 0;">12</div>
<div style="left:41px;top:421px;width:575px;height:19px;overflow:hidden"><div class="t" style="left:1.00px;top:-1.00px;font-size:11px;transform:scaleX(0.9658);transform-origin:0 0;">Example 21d: Ceiling plate 300mm wind 10m/s </div></div>
<div style="left:41px;top:421px;width:575px;height:19px;overflow:hidden"><div class="t" style="left:225.10px;top:-1.00px;font-size:11px;transform:scaleX(1.0439);transform-origin:0 0;">[T1=25 (Air) =&gt;|332.5mm|=&gt; T2=-10 (Air); U1=0.791; q1=28; q2=28]</div></div>
<div class="t" style="left:641.55px;top:423px;font-size:12px;transform:scaleX(1.0400);transform-origin:0 0;">25</div>
<div class="t" style="left:700.35px;top:423px;font-size:12px;transform:scaleX(1.0400);transform-origin:0 0;">30.0</div>
<div class="t" style="left:760.88px;top:423px;font-size:12px;transform:scaleX(1.0400);transform-origin:0 0;">259.8</div>
<div class="t" style="left:888.88px;top:423px;font-size:12px;transform:scaleX(1.0400);transform-origin:0 0;">0.791</div>
<div class="t" style="left:976.58px;top:423px;font-size:12px;transform:scaleX(0.9000);transform-origin:0 0;">Q12</div>
<div class="t" style="left:1006.47px;top:423px;font-size:12px;transform:scaleX(1.0400);transform-origin:0 0;">494.1796</div>
<div class="t" style="left:1082.61px;top:423px;font-size:12px;transform:scaleX(1.0400);transform-origin:0 0;">6495</div>
<div class="t" style="left:11.19px;top:443px;font-size:12px;transform:scaleX(0.9600);transform-origin:0 0;">13</div>
<div class="t" style="left:971.33px;top:443px;font-size:12px;transform:scaleX(1.0400);transform-origin:0 0;">Sum</div>
<div class="t" style="left:1006.47px;top:443px;font-size:12px;color:#FF0000;transform:scaleX(1.0400);transform-origin:0 0;">3713.525</div>
<div class="t" style="left:1079.14px;top:443px;font-size:12px;color:#FF0000;transform:scaleX(1.0400);transform-origin:0 0;">57538</div>
<div class="t" style="left:11.19px;top:463px;font-size:12px;transform:scaleX(0.9600);transform-origin:0 0;">14</div>
<div class="t" style="left:11.19px;top:483px;font-size:12px;transform:scaleX(0.9600);transform-origin:0 0;">15</div>
<div class="t" style="left:644.33px;top:483px;font-size:12px;transform:scaleX(1.0400);transform-origin:0 0;">A</div>
<div class="t" style="left:704.86px;top:483px;font-size:12px;transform:scaleX(1.0400);transform-origin:0 0;">A1</div>
<div class="t" style="left:761.59px;top:483px;font-size:12px;transform:scaleX(1.0400);transform-origin:0 0;">mass</div>
<div class="t" style="left:899.99px;top:483px;font-size:12px;transform:scaleX(1.0400);transform-origin:0 0;">U</div>
<div class="t" style="left:11.19px;top:502px;font-size:12px;transform:scaleX(0.9600);transform-origin:0 0;">16</div>
<div class="t" style="left:635.31px;top:502px;font-size:12px;transform:scaleX(1.0400);transform-origin:0 0;">Area</div>
<div class="t" style="left:14.64px;top:543px;font-size:12px;transform:scaleX(1.0400);transform-origin:0 0;">9.7</div>
<div class="t" style="left:43.3px;top:543px;font-size:12px;font-weight:bold;transform:scaleX(1.1198);transform-origin:0 0;">Berechnung mit dem excel-add-in &#x27;Solver&#x27;</div>
<div class="t" style="left:932.30px;top:532px;font-size:12px;transform:scaleX(1.0334);transform-origin:0 0;">Aktivierung des Add-ins &quot;Solver&quot;</div>
<div class="t" style="left:14.64px;top:563px;font-size:12px;transform:scaleX(1.0400);transform-origin:0 0;">9.8</div>
<div class="t" style="left:43px;top:563px;font-size:12px;font-weight:bold;transform:scaleX(1.1797);transform-origin:0 0;">Eingabe- / ausgabewerte</div>
<div class="t" style="left:43px;top:582px;font-size:12px;transform:scaleX(1.0219);transform-origin:0 0;">Beschreibung</div>
<div class="t" style="left:248.30px;top:582px;font-size:12px;transform:scaleX(0.9995);transform-origin:0 0;">Name</div>
<div class="t" style="left:315.75px;top:582px;font-size:12px;transform:scaleX(1.0866);transform-origin:0 0;">Wert</div>
<div class="t" style="left:43px;top:603px;font-size:12px;transform:scaleX(1.0638);transform-origin:0 0;">QH1 heating/cooling power</div>
<div class="t" style="left:252.77px;top:603px;font-size:12px;transform:scaleX(0.9500);transform-origin:0 0;">QH1</div>
<div class="t" style="left:302.57px;top:603px;font-size:12px;transform:scaleX(1.0400);transform-origin:0 0;">693.1093</div>
<div class="t" style="left:43px;top:623px;font-size:12px;transform:scaleX(1.0638);transform-origin:0 0;">QH2 heating/cooling power</div>
<div class="t" style="left:252.77px;top:623px;font-size:12px;transform:scaleX(0.9500);transform-origin:0 0;">QH2</div>
<div class="t" style="left:302.57px;top:623px;font-size:12px;transform:scaleX(1.0400);transform-origin:0 0;">1759.428</div>
<div class="t" style="left:43px;top:643px;font-size:12px;transform:scaleX(1.0638);transform-origin:0 0;">QH3 heating/cooling power</div>
<div class="t" style="left:252.77px;top:643px;font-size:12px;transform:scaleX(0.9500);transform-origin:0 0;">QH3</div>
<div class="t" style="left:302.57px;top:643px;font-size:12px;transform:scaleX(1.0400);transform-origin:0 0;">1260.988</div>
<div class="t" style="left:252.77px;top:663px;font-size:12px;transform:scaleX(0.9500);transform-origin:0 0;">Sum</div>
<div class="t" style="left:302.57px;top:663px;font-size:12px;color:#FF0000;transform:scaleX(1.0400);transform-origin:0 0;">3713.525</div>
<div class="t" style="left:427px;top:563px;font-size:12px;font-weight:bold;transform:scaleX(1.1883);transform-origin:0 0;">Ausgabe- / eingabewerte</div>
<div class="t" style="left:427px;top:582px;font-size:12px;transform:scaleX(1.0219);transform-origin:0 0;">Beschreibung</div>
<div class="t" style="left:632.30px;top:582px;font-size:12px;transform:scaleX(0.9995);transform-origin:0 0;">Name</div>
<div class="t" style="left:699.75px;top:582px;font-size:12px;transform:scaleX(1.0866);transform-origin:0 0;">Wert</div>
<div class="t" style="left:427px;top:603px;font-size:12px;transform:scaleX(1.0995);transform-origin:0 0;">Temperature room 1</div>
<div class="t" style="left:641.84px;top:603px;font-size:12px;transform:scaleX(0.9500);transform-origin:0 0;">T1</div>
<div class="t" style="left:705.65px;top:603px;font-size:12px;transform:scaleX(1.0400);transform-origin:0 0;">15</div>
<div class="t" style="left:427px;top:623px;font-size:12px;transform:scaleX(1.1069);transform-origin:0 0;">Temperature room 2</div>
<div class="t" style="left:641.84px;top:623px;font-size:12px;transform:scaleX(0.9500);transform-origin:0 0;">T2</div>
<div class="t" style="left:705.65px;top:623px;font-size:12px;transform:scaleX(1.0400);transform-origin:0 0;">22</div>
<div class="t" style="left:427px;top:643px;font-size:12px;transform:scaleX(1.0800);transform-origin:0 0;">Temperature room 3</div>
<div class="t" style="left:641.84px;top:643px;font-size:12px;transform:scaleX(0.9500);transform-origin:0 0;">T3</div>
<div class="t" style="left:705.65px;top:643px;font-size:12px;transform:scaleX(1.0400);transform-origin:0 0;">15</div>
<div class="t" style="left:427px;top:663px;font-size:12px;transform:scaleX(1.0800);transform-origin:0 0;">Outside temperature</div>
<div class="t" style="left:641.84px;top:663px;font-size:12px;transform:scaleX(0.9500);transform-origin:0 0;">T4</div>
<div class="t" style="left:703.58px;top:663px;font-size:12px;transform:scaleX(1.0400);transform-origin:0 0;">-10</div>
<div class="t" style="left:811px;top:563px;font-size:12px;font-weight:bold;transform:scaleX(1.0772);transform-origin:0 0;">Lösungsbedingungen</div>
<div class="t" style="left:811px;top:582px;font-size:12px;transform:scaleX(1.0219);transform-origin:0 0;">Beschreibung</div>
<div class="t" style="left:1016.30px;top:582px;font-size:12px;transform:scaleX(0.9995);transform-origin:0 0;">Name</div>
<div class="t" style="left:1083.75px;top:582px;font-size:12px;transform:scaleX(1.0866);transform-origin:0 0;">Wert</div>
<div class="t" style="left:811px;top:603px;font-size:12px;transform:scaleX(1.0329);transform-origin:0 0;">Q1+Q2+Q3+Q4-QH1=0</div>
<div class="t" style="left:1018.87px;top:603px;font-size:12px;transform:scaleX(0.9500);transform-origin:0 0;">Con1</div>
<div class="t" style="left:1093.12px;top:603px;font-size:12px;transform:scaleX(1.0400);transform-origin:0 0;">0</div>
<div class="t" style="left:811px;top:623px;font-size:12px;transform:scaleX(1.0365);transform-origin:0 0;">Q5+Q6+Q7+Q8-Q3-QH2=0</div>
<div class="t" style="left:1018.87px;top:623px;font-size:12px;transform:scaleX(0.9500);transform-origin:0 0;">Con2</div>
<div class="t" style="left:1093.12px;top:623px;font-size:12px;transform:scaleX(1.0400);transform-origin:0 0;">0</div>
<div class="t" style="left:811px;top:643px;font-size:12px;transform:scaleX(1.0429);transform-origin:0 0;">Q9+Q10+Q11+Q12-Q7-QH3=0</div>
<div class="t" style="left:1018.87px;top:643px;font-size:12px;transform:scaleX(0.9500);transform-origin:0 0;">Con3</div>
<div class="t" style="left:1093.12px;top:643px;font-size:12px;transform:scaleX(1.0400);transform-origin:0 0;">0</div>
<div style="left:29px;top:1px;width:0;height:0;border-top:5px solid #FF0000;border-left:5px solid transparent"></div>
<div style="left:29px;top:21px;width:0;height:0;border-top:5px solid #FF0000;border-left:5px solid transparent"></div>
<div style="left:29px;top:41px;width:0;height:0;border-top:5px solid #FF0000;border-left:5px solid transparent"></div>
<div style="left:29px;top:161px;width:0;height:0;border-top:5px solid #FF0000;border-left:5px solid transparent"></div>
<div style="left:29px;top:181px;width:0;height:0;border-top:5px solid #FF0000;border-left:5px solid transparent"></div>
<div style="left:29px;top:541px;width:0;height:0;border-top:5px solid #FF0000;border-left:5px solid transparent"></div>
<div style="left:995px;top:161px;width:0;height:0;border-top:5px solid #FF0000;border-left:5px solid transparent"></div>
<div style="left:1016px;top:27px;width:0;height:0;border-right:8px solid #000;border-top:4px solid transparent;border-bottom:4px solid transparent"></div>
<div style="left:1026px;top:27px;width:0;height:0;border-right:8px solid #000;border-top:4px solid transparent;border-bottom:4px solid transparent"></div>
<div style="left:1052px;top:27px;width:0;height:0;border-right:8px solid #000;border-top:4px solid transparent;border-bottom:4px solid transparent"></div>
<div style="left:1082px;top:27px;width:0;height:0;border-left:8px solid #000;border-top:4px solid transparent;border-bottom:4px solid transparent"></div>
<div style="left:1106px;top:27px;width:0;height:0;border-left:8px solid #000;border-top:4px solid transparent;border-bottom:4px solid transparent"></div>
<div style="left:1116px;top:27px;width:0;height:0;border-left:8px solid #000;border-top:4px solid transparent;border-bottom:4px solid transparent"></div>
</body></html>
